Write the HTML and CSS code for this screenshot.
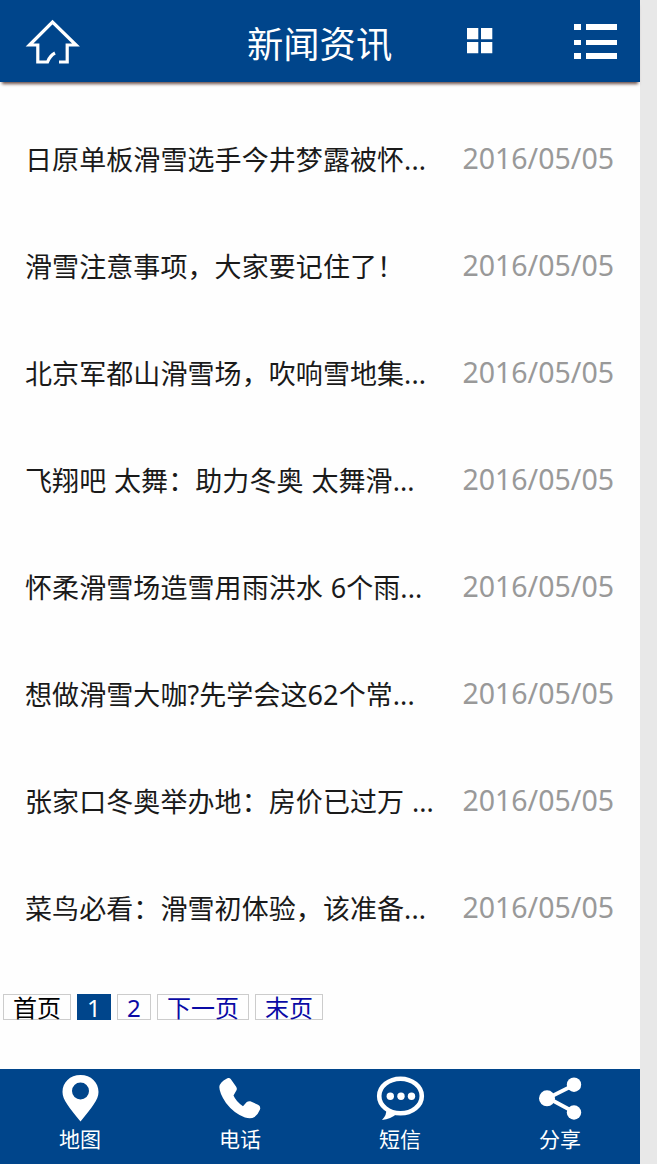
FILE: index.html
```
<!DOCTYPE html>
<html lang="zh-CN">
<head>
    <meta charset="UTF-8">
    <meta name="viewport" content="width=device-width, initial-scale=1.0">
    <title>新闻资讯</title>
    <link rel="stylesheet" href="styles.css">
</head>
<body>
<div class="page">

    <header class="header">
        <a href="#" class="home">
            <svg width="56" height="48" viewBox="0 0 56 48" fill="none" stroke="#fff" stroke-width="3.2">
                <path d="M30 35 Q25 37.5 22.5 44 H12.8 V27 H4.5 L27.5 4 L51 27 H42.2 V44 H34"/>
            </svg>
        </a>
        <h1>新闻资讯</h1>
        <a href="#" class="grid">
            <svg width="26" height="26" viewBox="0 0 26 26" fill="#fff">
                <path d="M0 0h11.3v11.3H0z M14 0h11.3v11.3H14z M0 14h11.3v11.3H0z M14 14h11.3v11.3H14z"/>
            </svg>
        </a>
        <a href="#" class="menu">
            <svg width="43" height="36" viewBox="0 0 43 36" fill="#fff">
                <path d="M0 0h7v6H0z M12 0h31v6H12z M0 16h7v5H0z M12 16h31v5H12z M0 29h7v6H0z M12 29h31v6H12z"/>
            </svg>
        </a>
    </header>

    <ul class="news">
        <li><a href="#">日原单板滑雪选手今井梦露被怀...</a><span>2016/05/05</span></li>
        <li><a href="#">滑雪注意事项，大家要记住了！</a><span>2016/05/05</span></li>
        <li><a href="#">北京军都山滑雪场，吹响雪地集...</a><span>2016/05/05</span></li>
        <li><a href="#">飞翔吧 太舞：助力冬奥 太舞滑...</a><span>2016/05/05</span></li>
        <li><a href="#">怀柔滑雪场造雪用雨洪水 6个雨...</a><span>2016/05/05</span></li>
        <li><a href="#">想做滑雪大咖?先学会这62个常...</a><span>2016/05/05</span></li>
        <li><a href="#">张家口冬奥举办地：房价已过万 ...</a><span>2016/05/05</span></li>
        <li><a href="#">菜鸟必看：滑雪初体验，该准备...</a><span>2016/05/05</span></li>
    </ul>

    <div class="pager">
        <span>首页</span>
        <span class="current">1</span>
        <a href="#">2</a>
        <a href="#">下一页</a>
        <a href="#">末页</a>
    </div>

    <footer class="footer">
        <a href="#">
            <svg width="50" height="50" viewBox="0 0 50 50" fill="#fff">
                <path fill-rule="evenodd" d="M25.5 1 C15 1 7.5 8.5 7.5 18 C7.5 26 14 33 25.5 47.5 C37 33 43.5 26 43.5 18 C43.5 8.5 36 1 25.5 1 Z M25.5 8.5 a8.5 8.5 0 1 1 0 17 a8.5 8.5 0 1 1 0 -17 Z"/>
            </svg>
            地图
        </a>
        <a href="#">
            <svg width="50" height="50" viewBox="0 0 50 50" fill="#fff">
                <path d="M11.5 4.8 L13 4.1 Q14.5 3.6 15.7 5 L21 12.5 Q22.4 14.5 21.5 16.2 L18.5 21.5 Q21 27.5 28 32.2 L31.5 28.3 Q33 27 35.3 27.2 L43 30.8 Q46 32.3 45 35.5 Q43 40.5 39.5 43 Q36 45.3 30 43.5 Q19 39.5 11 29 Q4.5 19.5 4.3 13 Q5 8 11.5 4.8 Z"/>
            </svg>
            电话
        </a>
        <a href="#">
            <svg width="50" height="50" viewBox="0 0 50 50" fill="#fff">
                <ellipse cx="25.5" cy="22" rx="21.3" ry="17.3" fill="none" stroke="#fff" stroke-width="4.6"/>
                <path d="M11.5 34 Q12 41 7 46 Q16 45 21.5 40 Z"/>
                <circle cx="15.3" cy="22.3" r="3.7"/>
                <circle cx="26" cy="22.3" r="3.7"/>
                <circle cx="36.5" cy="22.3" r="3.7"/>
            </svg>
            短信
        </a>
        <a href="#">
            <svg width="50" height="50" viewBox="0 0 50 50" fill="#fff">
                <path d="M39 11 L13 24 L39 38" fill="none" stroke="#fff" stroke-width="3.8"/>
                <circle cx="12" cy="24.3" r="8"/>
                <circle cx="39" cy="10.7" r="7.2"/>
                <circle cx="39" cy="38.5" r="7.2"/>
            </svg>
            分享
        </a>
    </footer>

</div>
</body>
</html>
```

FILE: styles.css
```
* {
    box-sizing: border-box;
}

body {
    margin: 0;
    background-color: #e8e8e8;
    font-family: "Noto Sans", "Noto Sans CJK SC", sans-serif;
}

a {
    text-decoration: none;
}

svg {
    display: block;
}

.page {
    display: flex;
    flex-direction: column;
    width: 640px;
    height: 1164px;
    background-color: #fefefe;
}

.header {
    display: grid;
    grid-template-columns: 160px 307px 107px 66px;
    height: 82px;
    background-color: #00458b;
    box-shadow: 0 4px 3px -2px #6b504a;
}

.header h1 {
    margin: 0;
    padding-left: 87px;
    font-size: 36.3px;
    font-weight: normal;
    line-height: 89px;
    color: #fff;
}

.home {
    padding: 18px 0 0 25px;
}

.grid {
    padding-top: 28px;
}

.menu {
    padding-top: 24px;
}

.news {
    list-style-type: none;
    margin: 0;
    padding: 24px 26px 0 25px;
}

.news li {
    display: flex;
    justify-content: space-between;
    height: 107px;
    line-height: 107px;
}

.news a {
    font-size: 27px;
    letter-spacing: 0.08px;
    word-spacing: 0.7px;
    color: #1a1a1a;
    white-space: nowrap;
}

.news span {
    font-size: 28.5px;
    line-height: 105px;
    color: #999;
}

.pager {
    display: flex;
    gap: 6px;
    padding: 32px 3px 0;
    font-size: 24px;
    line-height: 25px;
}

.pager a,
.pager span {
    min-width: 34px;
    height: 26px;
    padding: 0 9px;
    border: 1px solid #ccc;
}

.pager a {
    color: #0a0aa5;
}

.pager .current {
    background-color: #00458b;
    border-color: #00458b;
    color: #fff;
}

.footer {
    display: flex;
    height: 95px;
    margin-top: auto;
    background-color: #00458b;
}

.footer a {
    display: flex;
    flex-direction: column;
    align-items: center;
    width: 25%;
    padding-top: 5px;
    font-size: 21px;
    line-height: 30px;
    color: #fff;
}
```
